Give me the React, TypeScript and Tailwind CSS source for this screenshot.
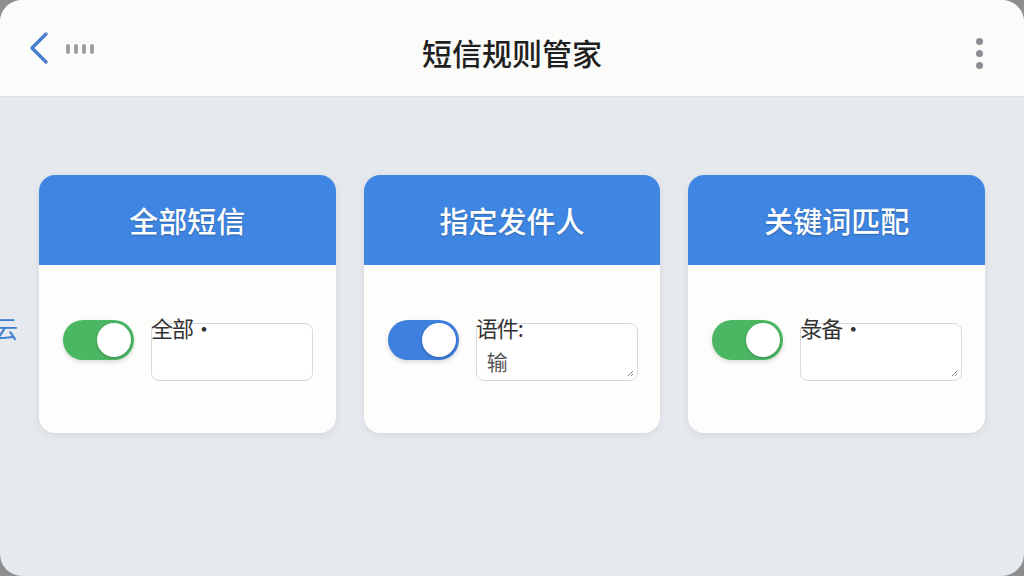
import React from "react";

const font = { fontFamily: '"Noto Sans CJK SC", "Noto Sans", sans-serif' };

function Toggle({ color }: { color: "green" | "blue" }) {
    return (
        <div
            className={`relative w-[71px] h-[40px] rounded-full shrink-0 shadow-[0_2px_4px_rgba(0,0,0,0.15)] ${
                color === "green" ? "bg-[#4cb763]" : "bg-[#3e80dd]"
            }`}
        >
            <div className="absolute right-[3px] top-[3px] w-[34px] h-[34px] rounded-full bg-white shadow-[0_1px_3px_rgba(0,0,0,0.25)]" />
        </div>
    );
}

function ResizeHandle() {
    return (
        <svg className="absolute right-[4px] bottom-[4px] w-[8px] h-[8px]" viewBox="0 0 8 8" fill="none" stroke="#888" strokeWidth={1}>
            <path d="M7 2L2 7M7 5L5 7" />
        </svg>
    );
}

type CardProps = {
    title: string;
    toggle: "green" | "blue";
    label: string;
    value?: string;
    handle?: boolean;
};

function RuleCard({ title, toggle, label, value, handle }: CardProps) {
    return (
        <div className="flex-1 h-[258px] bg-[#fdfdfc] rounded-[16px] overflow-hidden shadow-[0_2px_8px_rgba(0,0,0,0.08)]">
            {/* Header */}
            <div className="h-[90px] bg-[#3f86e2] flex items-center justify-center">
                <span className="text-white text-[29px] font-medium leading-none [text-shadow:0_1px_2px_rgba(0,0,0,0.25)]">{title}</span>
            </div>
            {/* Body */}
            <div className="flex items-start pl-[24px] pt-[55px] gap-[17px]">
                <Toggle color={toggle} />
                <div className="relative w-[162px] h-[58px] mt-[3px]">
                    <div className="absolute inset-0 rounded-[8px] border border-[#d9d9d9] bg-white" />
                    <span className="absolute left-0 top-[-10px] text-[22px] leading-[28px] text-[#333] tracking-[-1px]">
                        {label}
                    </span>
                    {value && (
                        <span className="absolute left-[11px] top-[24px] text-[21px] leading-[28px] text-[#555]">{value}</span>
                    )}
                    {handle && <ResizeHandle />}
                </div>
            </div>
        </div>
    );
}

export default function App() {
    return (
        <div className="w-[1024px] h-[576px] bg-[#8e8e8e]" style={font}>
            <div className="w-full h-full rounded-[22px] overflow-hidden bg-[#e6e9ed] flex flex-col relative">
                {/* Top bar */}
                <div className="h-[97px] shrink-0 bg-[#fbfbf9] border-b border-[#dcdfe3] flex items-center px-[28px] relative">
                    <svg className="w-[22px] h-[34px]" viewBox="0 0 22 34" fill="none" stroke="#4a80cc" strokeWidth={3.5} strokeLinecap="round" strokeLinejoin="round">
                        <path d="M18 3L4 17L18 31" />
                    </svg>
                    <div className="flex gap-[4px] ml-[16px] mt-[2px]">
                        <span className="w-[4px] h-[10px] rounded-full bg-[#9ca0a5]" />
                        <span className="w-[4px] h-[10px] rounded-full bg-[#9ca0a5]" />
                        <span className="w-[4px] h-[10px] rounded-full bg-[#9ca0a5]" />
                        <span className="w-[4px] h-[10px] rounded-full bg-[#9ca0a5]" />
                    </div>
                    <div className="absolute inset-0 flex items-center justify-center pointer-events-none">
                        <span className="text-[30px] font-medium text-[#1f1f1f] leading-none mt-[8px]">短信规则管家</span>
                    </div>
                    <div className="ml-auto flex flex-col gap-[5px] mr-[13px] mt-[10px]">
                        <span className="w-[7px] h-[7px] rounded-full bg-[#8c9095]" />
                        <span className="w-[7px] h-[7px] rounded-full bg-[#8c9095]" />
                        <span className="w-[7px] h-[7px] rounded-full bg-[#8c9095]" />
                    </div>
                </div>

                {/* Side glyph peeking from left edge */}
                <span className="absolute left-[-6px] top-[316px] text-[24px] leading-none text-[#3f7fd0]">云</span>

                {/* Cards */}
                <div className="flex gap-[28px] px-[39px] pt-[78px]">
                    <RuleCard title="全部短信" toggle="green" label="全部·" />
                    <RuleCard title="指定发件人" toggle="blue" label="语件:" value="输" handle />
                    <RuleCard title="关键词匹配" toggle="green" label="彔备·" handle />
                </div>
            </div>
        </div>
    );
}
